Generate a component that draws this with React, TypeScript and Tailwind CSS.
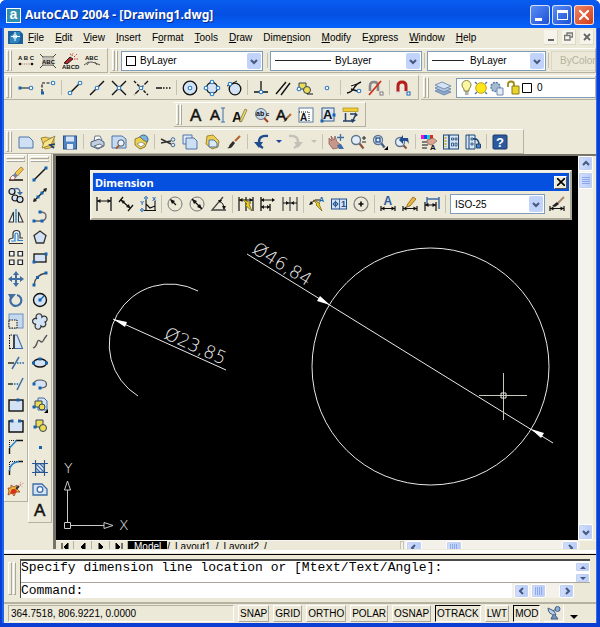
import type { ReactNode } from "react";
import clsx from "clsx";

/* ---------- icon primitives ---------- */

const BLUE = "#1463b0";
const STEEL = "#3f6ea6";
const PALE = "#d3e2f4";
const YELLOW = "#eedb55";

const Dot = ({ x, y }: { x: number; y: number }) => (
  <rect x={x - 1.5} y={y - 1.5} width="3" height="3" fill={BLUE} stroke="none" />
);

const Ring = ({ x, y }: { x: number; y: number }) => (
  <circle cx={x} cy={y} r="1.8" fill="#fff" stroke="#2a7cc9" strokeWidth="1.1" />
);

// horizontal dimension line with arrow heads between two extension lines
const DimLine = ({ y, x1 = 1, x2 = 15 }: { y: number; x1?: number; x2?: number }) => (
  <>
    <path d={`M${x1} ${y}H${x2}`} />
    <path
      d={`M${x1} ${y}l3.5 -2v4zM${x2} ${y}l-3.5 -2v4z`}
      fill="currentColor"
      stroke="none"
    />
  </>
);

interface LetterProps {
  x: number;
  y: number;
  size: number;
  color?: string;
  weight?: string;
  children: string;
}

const Letter = ({ x, y, size, color = "#111", weight = "700", children }: LetterProps) => (
  <text
    x={x}
    y={y}
    fontSize={size}
    fontWeight={weight}
    fill={color}
    stroke={weight === "400" ? color : "none"}
    strokeWidth="0.5"
    fontFamily="Liberation Sans, sans-serif"
  >
    {children}
  </text>
);

const ICONS: Record<string, ReactNode> = {
  /* express text */
  arcText: (
    <>
      <Letter x={0} y={7} size={6}>A B C</Letter>
      <path d="M1 11h14" stroke="#a55" strokeDasharray="1 1.4" />
      <circle cx="2" cy="11" r="1.3" fill="#111" stroke="none" />
      <circle cx="14" cy="11" r="1.3" fill="#111" stroke="none" />
    </>
  ),
  textFrame: (
    <>
      <path d="M3 4h10v8H3zM0 1l3 3M16 1l-3 3M0 15l3-3M16 15l-3-3" stroke="#444" />
      <rect x="2" y="4.500" width="12" height="7" fill="#c9c5bb" stroke="none" />
      <Letter x={2} y={10.5} size={6}>ABC</Letter>
    </>
  ),
  textExplode: (
    <>
      <path d="M2 10l6-6 3 2-6 5z" fill="#b22" stroke="#222" />
      <path d="M10 3l1-3M12 4l3-3M12 6l4 0M9 2l-1-2" stroke="#d33" strokeDasharray="1.500 1" />
      <Letter x={0} y={16} size={6}>ABCD</Letter>
    </>
  ),
  textArc: (
    <>
      <Letter x={1} y={7} size={6}>ABC</Letter>
      <path d="M0 12q4-4 8-3t8 3M5 9L3 12M11 9l2 3" stroke="#555" />
    </>
  ),

  /* object snap */
  track: (<><path d="M2 8h10" /><Dot x={2} y={8} /><Ring x={13} y={8} /></>),
  from: (<><path d="M2 12V3h9" strokeDasharray="3 1.500" strokeWidth="1.200" /><Dot x={2.500} y={13} /><Ring x={13} y={3} /></>),
  endpoint: (<><path d="M3 13L13 3" strokeWidth="1.4" /><Ring x={3} y={13} /><Ring x={13} y={3} /></>),
  midpoint: (<><path d="M1 15L15 1" strokeWidth="1.4" /><Ring x={8} y={8} /></>),
  intersect: (<><path d="M1 1l14 14M15 1L1 15" strokeWidth="1.4" /><Ring x={8} y={8} /></>),
  apparent: (<><path d="M15 1L1 15" strokeWidth="1.3" strokeDasharray="5 1.500" /><path d="M1 1l14 14" strokeWidth="1.4" strokeDasharray="3 1.500" /><Ring x={8} y={8} /></>),
  extension: (<><path d="M1 8h6" strokeWidth="1.4" /><path d="M8 8h8" strokeWidth="1.4" strokeDasharray="1.500 1.500" /></>),
  center: (<><circle cx="8" cy="8" r="6.800" fill={PALE} strokeWidth="1.3" /><Ring x={8} y={8} /></>),
  quadrant: (<><circle cx="8" cy="8" r="5.500" fill={PALE} strokeWidth="1.3" /><Ring x={8} y={2} /><Ring x={8} y={14} /><Ring x={2} y={8} /><Ring x={14} y={8} /></>),
  tangent: (<><circle cx="9" cy="9" r="5.800" fill={PALE} strokeWidth="1.300" /><path d="M1 6L11 1" /><Ring x={4} y={4} /></>),
  perpendicular: (<><path d="M1 12h14M8 1v10" strokeWidth="1.300" /><Ring x={8} y={12} /></>),
  parallel: (<path d="M1 14L11 2M6 15L15 3" strokeWidth="1.400" />),
  insertSnap: (<><path d="M2 3h7v6H2z" fill={YELLOW} stroke="#345" /><circle cx="10" cy="10" r="3.500" fill={YELLOW} stroke="#345" /><path d="M10 14h6" /><Ring x={2} y={9} /></>),
  node: (<Ring x={8} y={8} />),
  nearest: (<><path d="M1 13Q6 12 8 8t7-6" strokeWidth="1.400" /><path d="M5 6l6-2" /><path d="M5 9l6 2" strokeWidth="1.400" /><Ring x={13} y={11} /></>),
  snapNone: (<><path d="M2 11V6q0-4 4-4t4 4v5" stroke="#888" strokeWidth="2.600" /><path d="M1 15L13 1" stroke="#d0301c" strokeWidth="1.800" /><rect x="12" y="12" width="3" height="3" fill="#fff" stroke="#777" /></>),
  snapSettings: (<><path d="M3 12V6q0-4 4-4t4 4v5" stroke="#b61e1e" strokeWidth="3" /><path d="M1.500 12.500h3M9.500 12h3" stroke="#ddd" strokeWidth="2" /><rect x="12" y="12" width="3" height="3" fill="#fff" stroke={BLUE} /></>),
  layers: (<><path d="M0 11l7-3 9 4-7 3z" fill="#8fa9cb" stroke="#5f7ea8" strokeWidth="0.800" /><path d="M0 8l7-3 9 4-7 3z" fill="#b3c7e0" stroke="#5f7ea8" strokeWidth="0.800" /><path d="M0 5l7-3 9 4-7 3z" fill="#d6e3f2" stroke="#5f7ea8" strokeWidth="0.800" /></>),

  /* text */
  mtext: (<Letter x={2} y={14} size={17} weight="400">A</Letter>),
  dtext: (<><Letter x={0} y={13} size={15} weight="400">A</Letter><path d="M11 1h4M13 1v14M11 15h4" stroke={STEEL} /></>),
  editText: (<><Letter x={0} y={15} size={14}>A</Letter><path d="M8 13l5-11 2 1-5 11-2 1z" fill={YELLOW} stroke="#875" strokeWidth="0.800" /></>),
  findText: (<><circle cx="7" cy="7" r="5.500" fill="#c5d9ed" stroke="#678" /><Letter x={2} y={9} size={7}>ab</Letter><Letter x={12} y={9} size={6}>c</Letter><path d="M10 11l4 4" stroke="#a33f22" strokeWidth="2" /></>),
  styleText: (<><Letter x={0} y={13} size={15} weight="400">A</Letter><path d="M7 15q2-1 2-3l2-2 1 1-2 3z" fill="#222" stroke="none" /><path d="M11 11l4-4" stroke="#b06a3b" strokeWidth="2" /></>),
  scaleText: (<><rect x="1" y="1" width="14" height="14" fill="#fff" stroke="#5b7ba5" /><path d="M1 5h10v10" strokeDasharray="1 1" /><Letter x={2} y={14} size={10}>A</Letter></>),
  justifyText: (<><rect x="2" y="1" width="12" height="13" fill="#dfe9f5" stroke="#345b8c" /><Letter x={3} y={12} size={13}>A</Letter><Dot x={2} y={14} /><Dot x={14} y={8} /></>),
  spaceText: (<><rect x="1" y="1" width="15" height="3.500" fill="#f1cf33" stroke="#9a7b12" strokeWidth="0.600" /><path d="M3.500 6v8.500M1 14h9M8 7h6M14 7l-3 6" stroke="#1f3f66" strokeWidth="1.500" /><path d="M13 5l3 3-3 2zM9 12l5 1-4 3z" fill="#1f3f66" stroke="none" /></>),

  /* standard */
  newFile: (<path d="M1 3h10l4 4v7H1z" fill="#cfe0f5" stroke="#4e74a8" />),
  open: (<><path d="M1 4l5-1 2 1h6v9l-9 2z" fill="#f0d060" stroke="#8a7426" strokeWidth="0.800" /><path d="M4 8l11-6-4 9-9 3z" fill="#f8e58b" stroke="#8a7426" strokeWidth="0.800" /><path d="M14 14l-4-3 5-1" stroke="#1f3c74" strokeWidth="1.600" /></>),
  save: (<><rect x="1.500" y="2" width="13" height="13" fill="#4e83c4" stroke="#2c5186" /><rect x="4" y="2.500" width="8" height="5" fill="#d5e4f5" stroke="none" /><rect x="5" y="10" width="6" height="5" fill="#e3ebf5" stroke="none" /></>),
  print: (<><path d="M5 7l1-5h5l2 4" fill="#fff" stroke="#678" /><path d="M2 8l8-3 5 3v4l-6 3-7-3z" fill="#c2cfdf" stroke="#485e7d" /><path d="M5 12l6-2 3 2-5 2z" fill="#fff" stroke="#678" /></>),
  preview: (<><path d="M1 2h10l4 3v9H1z" fill="#c6daf1" stroke="#4e74a8" /><circle cx="10" cy="9" r="3.200" fill="#eef5fd" stroke="#456" /><path d="M8 11.500l-3 3" stroke="#a65a2d" strokeWidth="2" /></>),
  publish: (<><circle cx="10.500" cy="5.500" r="4.500" fill="#7ab4dc" stroke="#35648f" /><path d="M2 5l5-2 3 3 4 2-2 5-5 2-5-4z" fill="#ecd34f" stroke="#7c6519" strokeWidth="0.800" /><path d="M4 10l4-2 4 2-4 3z" fill="#fff" stroke="#777" strokeWidth="0.700" /></>),
  cut: (<><path d="M1 5l10 5M1 9l10-2" strokeWidth="1.500" stroke="#333" /><circle cx="13" cy="5.500" r="1.800" stroke={STEEL} /><circle cx="13" cy="11" r="1.800" stroke={STEEL} /></>),
  copyClip: (<><path d="M1 1h9v9H1z" fill="#dbe8f7" stroke="#4e74a8" /><path d="M4 4h8l3 3v8H4z" fill="#cddff3" stroke="#4e74a8" /></>),
  paste: (<><path d="M3 2l6-1 6 6-1 6-6 2-6-5z" fill="#edcf4d" stroke="#8b7022" strokeWidth="0.800" /><path d="M5 6h5l3 3v4H5z" fill="#dbe8f7" stroke="#4e74a8" /></>),
  match: (<><path d="M9 7l5-5" stroke="#b4632e" strokeWidth="2.200" /><path d="M1 14q2 0 2.500-3L7 7l2 2-3 4q-2 2-5 1z" fill="#2b2b2b" stroke="none" /></>),
  undo: (<><path d="M15 2Q6 1 6 8q0 4 4 6" stroke="#1f4b8f" strokeWidth="2.400" /><path d="M1 8h9l-4 6z" fill="#1f4b8f" stroke="none" /></>),
  redo: (<><path d="M1 2q9-1 9 6 0 4-4 6" stroke="#c3c1b7" strokeWidth="2.400" /><path d="M15 8H6l4 6z" fill="#c3c1b7" stroke="none" /></>),
  pan: (<><path d="M1 4l3 3-1-5 3 4 1-4 2 6 3 2-2 4-5 1-4-5z" fill="#c9978a" stroke="#8d5f59" strokeWidth="0.800" /><path d="M12.500 0v7M9 3.500h7" stroke={STEEL} strokeWidth="1.300" /><path d="M9 11l4-1 3 5h-5z" fill={STEEL} stroke="none" /></>),
  zoomReal: (<><circle cx="6" cy="6" r="4.500" fill="#e4eef9" stroke="#5d738f" strokeWidth="1.300" /><path d="M9.500 9.500l4 5" stroke="#8a5140" strokeWidth="2.200" /><path d="M12 4h4M14 2v4M12 8h4" stroke="#222" /></>),
  zoomWin: (<><circle cx="6" cy="6" r="4.500" fill="#e4eef9" stroke="#5d738f" strokeWidth="1.300" /><rect x="4" y="4" width="4" height="4" stroke="#1c4e8e" strokeWidth="1.300" /><path d="M9.500 9.500l3 4" stroke="#3f5f88" strokeWidth="2.200" /><path d="M16 12v4h-4z" fill="#000" stroke="none" /></>),
  zoomPrev: (<><circle cx="6" cy="8" r="4.500" fill="#e4eef9" stroke="#5d738f" strokeWidth="1.300" /><path d="M9.500 11.500l3 3" stroke="#8a5140" strokeWidth="2.200" /><path d="M5 6l4-5v3h5l1 6q-2-4-6-3v3z" fill="#1f4b8f" stroke="none" /></>),
  properties: (<><path d="M0 1h3v4H0z" fill="#e11ad6" stroke="none" /><path d="M3 1h3v4H3z" fill="#1b43ef" stroke="none" /><path d="M6 1h3v4H6z" fill="#16d3cf" stroke="none" /><path d="M9 1h3v4H9z" fill="#e82323" stroke="none" /><path d="M6 6l6-2 4 3-5 4-4-1z" fill="#d9a48f" stroke="#8b5e50" strokeWidth="0.700" /><path d="M1 8h5M1 11h6M1 14h5" /><Letter x={9} y={16} size={8}>A</Letter></>),
  designCenter: (<><rect x="0.500" y="1" width="15" height="14" fill="#d8e5f5" stroke="#1d4679" /><path d="M6 1v14" stroke="#1d4679" strokeWidth="1.600" /><path d="M2.500 3v10" stroke="#c9b12a" strokeWidth="2" strokeDasharray="2 1" /><path d="M8.500 4h2v2h-2zM12 4h2v2h-2zM8.500 9h2v3h-2zM12 9h2v3h-2z" stroke="#1d4679" strokeWidth="0.800" /></>),
  palettes: (<><path d="M1 1h9v14H1z" fill="#d8e5f5" stroke="#1d4679" /><path d="M4 1v14" stroke="#1d4679" /><path d="M6 4h2v2H6zM6 9h2v2H6z" stroke="#1d4679" strokeWidth="0.800" /><path d="M8 5q6-1 6 6" stroke="#1d4679" strokeWidth="1.500" /><path d="M11.500 10h4v4h-4z" fill="#4d80bd" stroke="#1d4679" /></>),
  help: (<><rect x="1" y="1" width="14" height="14" rx="1" fill="#2a5b9e" stroke="#1a3b6d" /><Letter x={4} y={13} size={13} color="#fff">?</Letter></>),

  /* modify */
  erase: (<><path d="M1 14h14" strokeWidth="1.300" /><path d="M7 7l6-6 2.500 2-6 7z" fill="#f1c84f" stroke="#a66a21" strokeWidth="0.800" /><path d="M5 9l2-2 2.500 3-2 2z" fill="#5c86bd" stroke="none" /><path d="M2 12l3-3 2.500 3-2 1.500H3z" fill="#fff" stroke="#b0563f" strokeWidth="0.900" /></>),
  copyObj: (<><circle cx="4" cy="4.500" r="3" fill={PALE} strokeWidth="1.200" /><circle cx="7" cy="11" r="3" fill={PALE} strokeWidth="1.200" /><circle cx="12" cy="12.500" r="3" fill={PALE} strokeWidth="1.200" /><path d="M6 2q6-2 6 4" stroke={STEEL} strokeWidth="1.500" /><path d="M9 5h6l-3 3.500z" fill={STEEL} stroke="none" /></>),
  mirror: (<><path d="M5.500 4v10H1z" fill="#f2f6fb" strokeWidth="1.100" stroke="#333" /><path d="M10.500 4v10H15z" fill="#f2f6fb" strokeWidth="1.100" stroke="#333" /><path d="M8 1v14" stroke="#1c82cf" strokeWidth="1.300" /></>),
  offset: (<><path d="M1 13.500v-2q0-2 4-2.500V5q0-3.500 3.500-3.500T12 5v4h3" fill="#f2f6fb" strokeWidth="1.200" stroke="#333" /><path d="M3 12h4V6q0-2 1.500-2T10 6v5.500h5" stroke="#2680cd" strokeWidth="1.200" /><path d="M1 14.500h14" strokeWidth="1.200" stroke="#333" /></>),
  array: (<path d="M1.500 1.500h4.500v4.500H1.500zM10 1.500h4.500v4.500H10zM1.500 10h4.500v4.500H1.500zM10 10h4.500v4.500H10z" fill="#f2f6fb" strokeWidth="1.200" stroke="#222" />),
  move: (<path d="M8 0l3 4H9v3h3V5l4 3-4 3V9H9v3h2l-3 4-3-4h2V9H4v2L0 8l4-3v2h3V4H5z" fill={STEEL} stroke="none" />),
  rotate: (<><path d="M3.500 5A5.500 5.500 0 1 0 9 3" stroke={STEEL} strokeWidth="2.200" /><path d="M0 2h8L3 8z" fill={STEEL} stroke="none" /></>),
  scale: (<><rect x="1" y="1" width="14" height="14" fill="#c4d8ef" stroke="#6d92bf" /><rect x="1" y="7" width="8" height="8" fill="#ece9d8" strokeDasharray="1.500 1" /></>),
  stretch: (<><path d="M1.500 15V1h4M1.500 14.500h4" strokeDasharray="1.500 1" /><path d="M6 1v13.500h8.500L9 1z" fill={PALE} strokeWidth="1.100" stroke={STEEL} /><path d="M6 1v13.500" strokeWidth="1.300" /></>),
  trim: (<><path d="M0 8h6" strokeWidth="1.300" /><path d="M9 8h7" stroke={BLUE} strokeDasharray="1.500 1.200" strokeWidth="1.300" /><path d="M4 14l7-12" stroke={STEEL} strokeWidth="1.500" /></>),
  extend: (<><path d="M0 8h5" strokeWidth="1.300" /><path d="M6 8h5" stroke={BLUE} strokeDasharray="1.500 1.200" strokeWidth="1.300" /><path d="M9 14l6-12" stroke={STEEL} strokeWidth="1.500" /></>),
  breakPoint: (<><rect x="1" y="3" width="14" height="11" fill={PALE} strokeWidth="1.400" /><Dot x={10} y={3} /></>),
  breakObj: (<><path d="M3 3H1v11h14V3h-2" fill={PALE} strokeWidth="1.400" /><Dot x={4} y={3} /><Dot x={11.500} y={3} /></>),
  chamfer: (<><path d="M1.500 15V9M8 1.500h7" strokeWidth="1.400" /><path d="M1.500 8V1.500h6" strokeDasharray="1 1" /><path d="M1.500 9l7-7.500" stroke="#2680cd" strokeWidth="1.400" /></>),
  fillet: (<><path d="M1.500 15v-5M10 1.500h5" strokeWidth="1.400" /><path d="M1.500 9V1.500h8" strokeDasharray="1 1" /><path d="M1.500 11Q2 2.500 11 1.500" stroke="#2680cd" strokeWidth="1.600" /></>),
  explode: (<><path d="M0 7l3 0 0-3 3 2 3-2 0 4 3 3-4 0-2 4-2-3-4 2 1-4z" fill="#eebd35" stroke="#9a3a22" strokeWidth="0.800" /><path d="M2 12l2-4 3 0 2 2-3 3z" fill="#d8301e" stroke="none" /><path d="M8 8l3-3" stroke="#333" strokeWidth="2" /><path d="M12 4l1-4M12 4l4-2M12 4l3 2" stroke="#d66" strokeWidth="0.800" strokeDasharray="1 1" /></>),

  /* draw */
  line: (<><path d="M2 14L14 2" strokeWidth="1.400" /><Dot x={2} y={14} /><Dot x={14} y={2} /></>),
  xline: (<><path d="M2 14L14 2" strokeWidth="1.200" /><path d="M1 15l1-4 3 3zM15 1l-4 1 3 3z" fill="#222" stroke="none" /><Dot x={6} y={10} /><Dot x={10} y={6} /></>),
  pline: (<><path d="M2 13h8q4-1 4-5T8 4" strokeWidth="1.400" stroke="#667" /><Dot x={2} y={13} /><Dot x={10} y={13} /><Dot x={8} y={4} /></>),
  polygon: (<path d="M8 2l6 4.500-2.300 7.500H4.300L2 6.500z" fill={PALE} strokeWidth="1.300" stroke="#333" />),
  rect: (<><rect x="2" y="4" width="12" height="8" fill={PALE} strokeWidth="1.300" /><Dot x={2} y={12} /><Dot x={14} y={4} /></>),
  arc: (<><path d="M2 14Q3 4 14 2" strokeWidth="1.300" stroke="#444" /><Dot x={2} y={14} /><Dot x={5.500} y={6.500} /><Dot x={14} y={2} /></>),
  circle: (<><circle cx="8" cy="8" r="6.500" fill={PALE} strokeWidth="1.400" /><path d="M8 8l4-4" stroke={BLUE} strokeWidth="1.300" /><Dot x={8} y={8} /></>),
  cloud: (<path d="M5 6a3 3 0 1 1 5-2 3 3 0 1 1 3 5 2.800 2.800 0 1 1-4 4 3 3 0 1 1-5-2A2.800 2.800 0 1 1 5 6z" fill={PALE} strokeWidth="1.200" stroke="#333" />),
  spline: (<path d="M1 14Q4 13 5 9t3-2 3 0 4-6" strokeWidth="1.300" stroke="#555" />),
  ellipse: (<><ellipse cx="8" cy="8" rx="6.500" ry="4" fill={PALE} strokeWidth="1.300" /><Dot x={1.500} y={8} /><Dot x={14.500} y={8} /><Dot x={8} y={4} /></>),
  ellipseArc: (<><path d="M2 8q0-4 6-4t6.500 4-6.500 4" fill={PALE} strokeWidth="1.200" stroke="#555" /><Dot x={2} y={8} /><Dot x={8} y={12} /></>),
  insertBlock: (<><path d="M6 1h6l3 3v9H6z" fill={PALE} stroke={STEEL} /><path d="M3 4h7v6H3z" fill={YELLOW} stroke="#345" /><circle cx="10" cy="10" r="3" fill={YELLOW} stroke="#345" /><Dot x={2} y={10} /><path d="M16 12v4h-4z" fill="#000" stroke="none" /></>),
  makeBlock: (<><path d="M4 2h7v7H4z" fill={YELLOW} stroke="#345" /><circle cx="11" cy="10" r="3.500" fill={YELLOW} stroke="#345" /><Dot x={3} y={9} /></>),
  point: (<Dot x={8.500} y={8.500} />),
  hatch: (<><path d="M4 4h8v8H4z" fill="#eef4fb" stroke={STEEL} /><path d="M4 8l4 4M4 4l8 8M8 4l4 4" stroke={STEEL} strokeWidth="1.200" /><path d="M3.500 0v16M12.500 0v16M0 3.500h16M0 12.500h16" stroke="#2a568f" strokeWidth="1.100" /></>),
  region: (<><path d="M1 3h9l5 5v6H1z" fill={PALE} stroke={STEEL} strokeWidth="1.300" /><circle cx="8" cy="8.500" r="2.800" fill="#fff" stroke={STEEL} strokeWidth="1.300" /></>),

  /* dimension */
  dimLinear: (<><path d="M1 1v14M15 1v14" strokeWidth="1.300" /><DimLine y={5} /></>),
  dimAligned: (<><path d="M3 4l9 8M5 1L1 6M15 9l-5 6" strokeWidth="1.300" /><path d="M3 4l4 1-2 3zM12 12l-4-1 3-3z" fill="#111" stroke="none" /></>),
  dimOrdinate: (
    <>
      <path d="M6 4v11M4 14.500h12M6 8l4 4 5-2M15 5v9" strokeWidth="1.100" />
      <Letter x={0} y={9} size={6} color={BLUE}>Y</Letter>
      <Letter x={12} y={4.5} size={6} color={BLUE}>X</Letter>
      <circle cx="2" cy="14" r="1.300" stroke={BLUE} />
      <circle cx="6" cy="2" r="1.300" stroke={BLUE} />
    </>
  ),
  dimRadius: (<><circle cx="8" cy="8" r="7" stroke="#777" /><path d="M9 9L4 4" strokeWidth="1.300" /><path d="M3 3l5 2-3 3z" fill="#111" stroke="none" /></>),
  dimDiameter: (<><circle cx="8" cy="8" r="7" stroke="#777" /><path d="M3 3l10 10" strokeWidth="1.300" /><path d="M3 3l5 2-3 3zM13 13l-5-2 3-3z" fill="#111" stroke="none" /></>),
  dimAngular: (<><path d="M12 1L1 14h14" strokeWidth="1.300" stroke="#444" /><path d="M8 5q5 2 5 8" /><path d="M7 4l4 0-2 3zM13 14l-2-4h4z" fill="#111" stroke="none" /></>),
  dimQuick: (<><path d="M1 1v14M15 1v14M8 1v14" strokeWidth="1.200" /><DimLine y={4} /><path d="M4 3l9 4-2 1 3 7-7-6 2-1z" fill="#e8cf22" stroke="#6d5d0a" strokeWidth="0.700" /></>),
  dimBase: (<><path d="M1 1v14M10 8v7" strokeWidth="1.300" /><path d="M1 4h13M1 11h9" /><path d="M1 4l3-2v4zM15 4l-3-2v4zM1 11l3-2v4zM10 11l-3-2v4z" fill="#111" stroke="none" /></>),
  dimContinue: (<><path d="M1 1v14M8 1v14M15 1v14" strokeWidth="1.200" stroke="#444" /><path d="M1 7h14" /><path d="M7 7l-3-2v4zM9 7l3-2v4z" fill="#111" stroke="none" /></>),
  leader: (<><path d="M1 8l5-4h5" /><path d="M0 9l2-4 2 3z" fill="#111" stroke="none" /><path d="M4 4l7 3-1 1 3 7-6-6 1-1z" fill="#e8cf22" stroke="#6d5d0a" strokeWidth="0.700" /><Letter x={10} y={6} size={7} color={BLUE}>A</Letter></>),
  tolerance: (<><rect x="0.500" y="3" width="15" height="10" fill="#d5e4f5" stroke="#1c4e8e" /><path d="M8.500 3v10M4.500 4.500v7M1.500 8h6" stroke="#1c4e8e" strokeWidth="0.800" /><circle cx="4.500" cy="8" r="2" stroke="#1c4e8e" /><Letter x={10} y={11} size={9} color="#1c4e8e">1</Letter></>),
  centerMark: (<><circle cx="8" cy="8" r="7" stroke="#777" strokeWidth="1.200" /><path d="M8 5.500v5M5.500 8h5" strokeWidth="1.700" /></>),
  dimEdit: (<><Letter x={3.500} y={9} size={12} color="#2c5c9c">A</Letter><path d="M1 10v5M15 10v5" strokeWidth="1.200" /><DimLine y={12.500} /></>),
  dimTextEdit: (<><path d="M5 9l6-8 3 2-6 7-3 1z" fill="#e9b93d" stroke="#8a5a20" strokeWidth="0.800" /><path d="M1 10v5M15 10v5" strokeWidth="1.200" /><DimLine y={12.500} /></>),
  dimUpdate: (<><path d="M3 1v8M15 1v12M3 3h12" stroke={STEEL} strokeWidth="1.500" /><path d="M1 6v9M12 6v9" strokeWidth="1.200" /><DimLine y={9} x2={12} /></>),
  dimStyle: (<><path d="M9 7l6-6" stroke="#a9876b" strokeWidth="2" /><path d="M3 10l5-4 2 2-4 3z" fill="#222" stroke="none" /><path d="M1 10v5M15 10v5" strokeWidth="1.200" /><DimLine y={12.500} /></>),
};

const Icon = ({ name }: { name: string }) => (
  <svg viewBox="0 0 16 16" className="h-4 w-4 shrink-0 overflow-visible text-[#111]" fill="none" stroke="currentColor" aria-hidden="true">
    {ICONS[name]}
  </svg>
);

/* ---------- toolbars ---------- */

const Chevron = ({ dir = "down" }: { dir?: "up" | "down" | "left" | "right" }) => {
  const d = {
    down: "M1 3l3 3 3-3",
    up: "M1 5l3-3 3 3",
    left: "M5 1L2 4l3 3",
    right: "M3 1l3 3-3 3",
  }[dir];
  return (
    <svg viewBox="0 0 8 8" className="h-2 w-2 shrink-0" fill="none" stroke="#45597d" strokeWidth="2" aria-hidden="true">
      <path d={d} />
    </svg>
  );
};

const Grip = ({ vertical }: { vertical?: boolean }) => (
  <div className={clsx("flex shrink-0 gap-px", vertical ? "mx-0.5 mb-px h-1.5 flex-col" : "mx-0.5 my-px w-1.5")}>
    <div className="flex-1 border border-t-white border-l-white border-r-[#aca899] border-b-[#aca899]" />
    <div className="flex-1 border border-t-white border-l-white border-r-[#aca899] border-b-[#aca899]" />
  </div>
);

const Separator = () => <div className="mx-0.5 my-1 w-px shrink-0 bg-[#c5c2b2]" />;

const Tool = ({ name, vertical }: { name: string; vertical?: boolean }) => (
  <button aria-label={name} className={clsx("flex shrink-0 items-center justify-center", vertical ? "h-[21px] w-full" : "w-[22px]")}>
    <Icon name={name} />
  </button>
);

const DropArrow = ({ disabled }: { disabled?: boolean }) => (
  <button aria-label="History" className="flex w-[13px] shrink-0 items-center justify-center">
    <span className={clsx("border-x-[3px] border-t-[3px] border-x-transparent", disabled ? "border-t-[#c3c1b7]" : "border-t-[#1f3fa0]")} />
  </button>
);

// "|" is a separator, "v" and "x" are the enabled / disabled history arrows
const renderTools = (names: string[]) =>
  names.map((n, i) => {
    if (n === "|") return <Separator key={i} />;
    if (n === "v") return <DropArrow key={i} />;
    if (n === "x") return <DropArrow key={i} disabled />;
    return <Tool key={i} name={n} />;
  });

const Toolbar = ({ className, children }: { className?: string; children: ReactNode }) => (
  <div className={clsx("flex h-[25px] min-w-0 border-t border-r border-b border-t-white border-r-[#b5b2a2] border-b-[#b5b2a2] pr-1", className)}>
    <Grip />
    <div className="ml-px flex min-w-0 flex-1">{children}</div>
  </div>
);

interface ComboProps {
  label: string;
  value: string;
  leading?: ReactNode;
  className?: string;
  pad: string;
}

const Combo = ({ label, value, leading, className, pad }: ComboProps) => (
  <div className={clsx("relative flex h-5 items-center self-center border border-[#7f9db9] bg-white", className)}>
    <span className="pointer-events-none absolute left-1 flex items-center">{leading}</span>
    <select aria-label={label} className={clsx("h-full w-full min-w-0 appearance-none bg-transparent text-[10px] outline-none", pad)}>
      <option>{value}</option>
    </select>
    <span className="pointer-events-none absolute top-px right-px bottom-px flex w-3.5 items-center justify-center rounded-[2px] bg-[#c1d2fb]">
      <Chevron />
    </span>
  </div>
);

/* ---------- title + menu ---------- */

const MENUS: [string, string, string][] = [
  ["", "F", "ile"],
  ["", "E", "dit"],
  ["", "V", "iew"],
  ["", "I", "nsert"],
  ["F", "o", "rmat"],
  ["", "T", "ools"],
  ["", "D", "raw"],
  ["Dime", "n", "sion"],
  ["", "M", "odify"],
  ["E", "x", "press"],
  ["", "W", "indow"],
  ["", "H", "elp"],
];

const CAPTION = "flex size-5 items-center justify-center rounded-[3px] border border-white/80";

const TitleBar = () => (
  <header className="flex h-7 shrink-0 items-center bg-linear-to-b from-[#0a5cf0] via-[#0450e2] to-[#0762fb] pt-0.5 pl-1.5">
    <div className="mr-1 flex size-[15px] items-center justify-center border border-white bg-[#2f8fae] pb-0.5 font-['Liberation_Sans',sans-serif] text-sm leading-none font-bold text-white">
      a
    </div>
    <h1 className="min-w-0 flex-1 truncate font-['Noto_Sans',sans-serif] text-xs font-bold text-white [text-shadow:1px_1px_0_#0a2a88]">
      AutoCAD 2004 - [Drawing1.dwg]
    </h1>
    <div className="flex gap-0.5 pr-1.5">
      <button aria-label="Minimize" className={clsx(CAPTION, "bg-linear-to-br from-[#5a8df5] to-[#1c4fd6]")}>
        <span className="mt-2 mr-1 h-[3px] w-[7px] bg-white" />
      </button>
      <button aria-label="Maximize" className={clsx(CAPTION, "bg-linear-to-br from-[#5a8df5] to-[#1c4fd6]")}>
        <span className="h-[10px] w-[11px] border border-t-[3px] border-white" />
      </button>
      <button aria-label="Close" className={clsx(CAPTION, "bg-linear-to-br from-[#ee8464] to-[#cf3a12]")}>
        <svg viewBox="0 0 10 10" className="size-2.5" stroke="#fff" strokeWidth="2">
          <path d="M0 0l10 10M10 0L0 10" />
        </svg>
      </button>
    </div>
  </header>
);

const MDI = "flex h-[15px] w-3.5 items-center justify-center bg-[#f5f3ea] border-r border-b border-[#dcd9c8]";

const MenuBar = () => (
  <nav className="flex h-5 shrink-0 items-center pr-0.5 pb-0.5 pl-1">
    <svg viewBox="0 0 15 15" className="mr-[5px] size-[15px]" aria-hidden="true">
      <path d="M0 1h12l3 3v10H0z" fill="#1c5f9c" />
      <path d="M2 13V6l5-4h5v8l-3 3z" fill="#2f86bd" />
      <path d="M7 2v9M3 6.500h9" stroke="#fff" strokeWidth="1" />
      <path d="M5.500 5h3v3h-3z" fill="none" stroke="#fff" strokeWidth="0.800" />
    </svg>
    <ul className="flex flex-1 gap-[11px] text-[10px]">
      {MENUS.map(([pre, key, post]) => (
        <li key={pre + key + post}>
          <button>
            {pre}
            <u>{key}</u>
            {post}
          </button>
        </li>
      ))}
    </ul>
    <div className="flex gap-1">
      <button aria-label="Minimize drawing" className={MDI}>
        <span className="mt-1.5 h-0.5 w-1.5 bg-[#666]" />
      </button>
      <button aria-label="Restore drawing" className={MDI}>
        <svg viewBox="0 0 9 9" className="size-[9px]" fill="none" stroke="#777">
          <path d="M3 3V1h5.500v4H6.500" strokeWidth="1.400" />
          <path d="M.5 3.500h5.500v4.500H.5z" strokeWidth="1.400" />
        </svg>
      </button>
      <button aria-label="Close drawing" className={MDI}>
        <svg viewBox="0 0 8 8" className="size-2" stroke="#666" strokeWidth="1.800">
          <path d="M1 1l6 6M7 1L1 7" />
        </svg>
      </button>
    </div>
  </nav>
);

const LineSample = ({ long }: { long?: boolean }) => (
  <span className={clsx("h-px bg-[#222]", long ? "w-14" : "w-8")} />
);
const Swatch = () => <span className="size-2.5 border border-black bg-white" />;

const LayerState = () => (
  <svg viewBox="0 0 74 16" className="h-4 w-[74px]" fill="none" aria-hidden="true">
    <path d="M3 9Q1 7 1 5a4.300 4.300 0 0 1 9 0q0 2-2 4v2H3z" fill="#fbf6a0" stroke="#8a8348" />
    <path d="M4 12h3.500M4 14h3.500" stroke="#666" />
    <path d="M14 2l2 2M26 2l-2 2M14 14l2-2M26 14l-2-2" stroke="#4f83b8" strokeWidth="1.500" />
    <circle cx="20" cy="8" r="5.300" fill="#fde51c" stroke="#c9a20e" />
    <circle cx="34.500" cy="7" r="4.500" fill="#a4bad1" stroke="#5a7ea5" strokeWidth="1.500" strokeDasharray="2 1" />
    <path d="M36 8h6v7h-6z" fill="#e3ecf6" stroke="#6e8db1" />
    <path d="M47 7V4q0-2.500 3-2.500T53 4v5" stroke="#9b8a17" strokeWidth="1.800" />
    <path d="M51 6h7v8h-7z" fill="#e7d52c" stroke="#8a7a14" />
    <path d="M61.500 3.500h9v9h-9z" fill="#fff" stroke="#000" />
  </svg>
);

const Toolbars = () => (
  <div className="flex shrink-0 flex-col gap-0.5 overflow-hidden">
    <div className="flex">
      <Toolbar className="mr-0.5">{renderTools(["arcText", "textFrame", "textExplode", "textArc"])}</Toolbar>
      <Toolbar className="flex-1">
        <div className="flex min-w-0 flex-1">
          <Combo label="Color" value="ByLayer" leading={<Swatch />} pad="pl-[18px]" className="mr-0.5 w-[142px]" />
          <Separator />
          <Combo label="Linetype" value="ByLayer" leading={<LineSample long />} pad="pl-16" className="w-[152px]" />
          <Separator />
          <Combo label="Lineweight" value="ByLayer" leading={<LineSample />} pad="pl-[42px]" className="w-[119px]" />
          <Separator />
          <button disabled className="-mr-1 h-5 min-w-0 flex-1 self-center overflow-hidden border border-r-0 border-[#d9d6c5] pl-2 text-left text-[10px] text-[#b5b2a0]">
            ByColor
          </button>
        </div>
      </Toolbar>
    </div>
    <div className="flex">
      <Toolbar className="mr-0.5">
        {renderTools([
          "track", "from", "|", "endpoint", "midpoint", "intersect", "apparent", "extension", "|",
          "center", "quadrant", "tangent", "|", "perpendicular", "parallel", "insertSnap", "node", "|",
          "nearest", "snapNone", "|", "snapSettings",
        ])}
      </Toolbar>
      <Toolbar className="flex-1">
        <div className="-mr-1 flex min-w-0 flex-1">
          <span className="mr-0.5 flex"><Tool name="layers" /></span>
          <div className="relative flex h-5 min-w-0 flex-1 items-center self-center border-y border-l border-[#7f9db9] bg-white">
            <span className="pointer-events-none absolute left-1"><LayerState /></span>
            <select aria-label="Layer" className="h-full w-full min-w-0 appearance-none bg-transparent pl-20 text-[10px] outline-none">
              <option>0</option>
            </select>
          </div>
        </div>
      </Toolbar>
    </div>
    <div className="flex pl-[170px]">
      <Toolbar>{renderTools(["mtext", "dtext", "editText", "findText", "styleText", "scaleText", "justifyText", "spaceText"])}</Toolbar>
    </div>
    <div className="flex">
      <Toolbar>
        {renderTools([
          "newFile", "open", "save", "|", "print", "preview", "publish", "|", "cut", "copyClip", "paste", "match", "|",
          "undo", "v", "redo", "x", "|", "pan", "zoomReal", "zoomWin", "zoomPrev", "|",
          "properties", "designCenter", "palettes", "|", "help",
        ])}
        <span className="w-2" />
      </Toolbar>
    </div>
  </div>
);

const SideBar = ({ names }: { names: string[] }) => (
  <div className="w-6 shrink-0 self-start border-r border-b border-r-[#b5b2a2] border-b-[#b5b2a2] pt-0.5 pb-0.5 shadow-[inset_1px_1px_0_#fff]">
    <Grip vertical />
    {names.map((n) => (
      <Tool key={n} name={n} vertical />
    ))}
  </div>
);

const MODIFY = ["erase", "copyObj", "mirror", "offset", "array", "move", "rotate", "scale", "stretch", "trim", "extend", "breakPoint", "breakObj", "chamfer", "fillet", "explode"];
const DRAW = ["line", "xline", "pline", "polygon", "rect", "arc", "circle", "cloud", "spline", "ellipse", "ellipseArc", "insertBlock", "makeBlock", "point", "hatch", "region", "mtext"];

/* ---------- drawing area ---------- */

const SCROLL = "flex shrink-0 items-center justify-center rounded-[2px] border border-white bg-linear-to-r from-[#d2dffd] to-[#b7cbfb] shadow-[0_0_0_1px_#c3d0ee_inset]";

const Drawing = () => (
  <svg className="block h-full w-full" fill="none" stroke="#e8e8e8" aria-label="Drawing1">
    <circle cx="374.500" cy="210.500" r="118.500" />
    <path d="M191 98L497 287" />
    <path d="M274 149l-13-4 3-5zM475 273l13 4-3 5z" fill="#fff" stroke="none" />
    <path d="M142 135A60.500 60.500 0 0 0 82 240" />
    <path d="M57 163l113 51" />
    <path d="M57 163l14 3-2 5z" fill="#fff" stroke="none" />
    <g fill="#eee" stroke="none" fontFamily="DejaVu Sans, sans-serif" fontWeight="200" fontSize="18">
      <text transform="translate(195 96) rotate(31.700)">Ø46,84</text>
      <text transform="translate(107 182) rotate(24.300)">Ø23,85</text>
      <text x="8" y="317" fontSize="14">Y</text>
      <text x="63" y="374" fontSize="14">X</text>
    </g>
    {/* ucs icon */}
    <path d="M8.500 366.500h6v6h-6zM11.500 366V334M15 369.500H48M11.500 325l-3 9h6zM57 369.500l-9-3v6z" stroke="#c9c9c9" />
    {/* crosshair */}
    <path d="M423 239.500h48M447.500 217v47" stroke="#c9c9b8" />
    <path d="M445 237h5v5h-5z" />
  </svg>
);

const DimensionBar = () => (
  <section aria-label="Dimension" className="absolute top-[14px] right-1.5 left-[34px] border-2 border-t-[#f4f2e8] border-r-[#aca899] border-b-[#aca899] border-l-[#f4f2e8] bg-[#ece9d8] p-px">
    <div className="flex h-[18px] items-center bg-[#0650e0] pr-0.5">
      <h2 className="flex-1 pl-0.5 font-['Noto_Sans',sans-serif] text-[11px] leading-none font-bold text-white">Dimension</h2>
      <button aria-label="Close toolbar" className="flex size-[13px] items-center justify-center border border-t-white border-r-[#555] border-b-[#555] border-l-white bg-[#ece9d8]">
        <svg viewBox="0 0 8 8" className="size-2" stroke="#000" strokeWidth="1.600">
          <path d="M0 0l8 8M8 0L0 8" />
        </svg>
      </button>
    </div>
    <div className="flex h-[26px]">
      {renderTools([
        "dimLinear", "dimAligned", "dimOrdinate", "|", "dimRadius", "dimDiameter", "dimAngular", "|",
        "dimQuick", "dimBase", "dimContinue", "|", "leader", "tolerance", "centerMark", "|",
        "dimEdit", "dimTextEdit", "dimUpdate", "|",
      ])}
      <Combo label="Dimension style" value="ISO-25" pad="pl-1" className="ml-0.5 w-[95px]" />
      <span className="ml-px flex"><Tool name="dimStyle" /></span>
    </div>
  </section>
);

const TAB_NAV = ["M3 2v8M9 2L5 6l4 4z", "M8 2L4 6l4 4z", "M4 2l4 4-4 4z", "M9 2v8M3 2l4 4-4 4z"];

function ThumbLines({ vertical }: { vertical?: boolean }) {
  return (
    <svg viewBox="0 0 8 8" className="size-2" stroke="#8ea9ea">
      <path d={vertical ? "M0 .5h8M0 2.500h8M0 4.500h8M0 6.500h8" : "M.5 0v8M2.500 0v8M4.500 0v8M6.500 0v8"} />
    </svg>
  );
}

const LayoutTabs = () => (
  <div className="flex h-[9px] items-start overflow-hidden border-t border-[#f6f4ec] text-[10px] leading-3">
    <div className="flex">
      {TAB_NAV.map((d, i) => (
        <button key={i} aria-label={`Tab scroll ${i + 1}`} className="flex w-[18px] justify-center border-r border-[#b5b2a2]">
          <svg viewBox="0 0 12 12" className="size-3" fill="#000" stroke="#000">
            <path d={d} />
          </svg>
        </button>
      ))}
    </div>
    <button className="relative flex bg-black px-1.5 text-white">Model</button>
    <span aria-hidden="true">/</span>
    <button className="px-[5px]">Layout1</button>
    <span aria-hidden="true">/</span>
    <button className="px-[5px]">Layout2</button>
    <span aria-hidden="true">/</span>
    <div className="mr-4 ml-auto flex w-[180px] items-start bg-[#f3f1ea]">
      <span className="mr-0.5 h-3 w-1 border border-[#c5c2b2]" />
      <button aria-label="Scroll left" className={clsx(SCROLL, "h-3.5 w-4")}><Chevron dir="left" /></button>
      <span className={clsx(SCROLL, "ml-6 h-3.5 w-4")}><ThumbLines /></span>
      <button aria-label="Scroll right" className={clsx(SCROLL, "mr-0.5 ml-auto h-3.5 w-4")}><Chevron dir="right" /></button>
    </div>
  </div>
);

const Workspace = () => (
  <div className="flex min-h-0 flex-1">
    <SideBar names={MODIFY} />
    <SideBar names={DRAW} />
    <div className="ml-px flex min-w-0 flex-1 flex-col border-t-2 border-l-[3px] border-[#77756a]">
      <div className="flex min-h-0 flex-1">
        <main className="relative min-w-0 flex-1 overflow-hidden bg-black">
          <Drawing />
          <DimensionBar />
        </main>
        <div className="mr-[3px] flex w-[15px] flex-col gap-px bg-[#f4f2ec]">
          <button aria-label="Scroll up" className={clsx(SCROLL, "h-[15px]")}><Chevron dir="up" /></button>
          <span className={clsx(SCROLL, "h-[17px]")}><ThumbLines vertical /></span>
          <button aria-label="Scroll down" className={clsx(SCROLL, "mt-auto h-4")}><Chevron dir="down" /></button>
        </div>
      </div>
      <LayoutTabs />
    </div>
  </div>
);

/* ---------- command line + status ---------- */

const CommandLine = () => (
  <div className="flex h-12 shrink-0 border-t border-black pt-1 pr-1.5 pb-1">
    <div className="mx-1 mt-[3px] mb-[3px] flex w-2 gap-px">
      <div className="flex-1 border border-t-white border-r-[#aca899] border-b-[#aca899] border-l-white" />
      <div className="flex-1 border border-t-white border-r-[#aca899] border-b-[#aca899] border-l-white" />
    </div>
    <div className="flex min-w-0 flex-1 flex-col border-t-2 border-l border-[#4a4a46] font-['Liberation_Mono',monospace] text-[13px]">
      <div className="flex flex-1 justify-between overflow-hidden bg-white">
        <output className="leading-[14px] whitespace-nowrap">Specify dimension line location or [Mtext/Text/Angle]:</output>
        <div className="mt-px flex w-[15px] shrink-0 flex-col gap-px">
          <button aria-label="History up" className={clsx(SCROLL, "h-2.5")}>
            <span className="border-x-[3px] border-b-[3px] border-x-transparent border-b-[#45597d]" />
          </button>
          <button aria-label="History down" className={clsx(SCROLL, "h-2.5")}>
            <span className="border-x-[3px] border-t-[3px] border-x-transparent border-t-[#45597d]" />
          </button>
        </div>
      </div>
      <div className="flex h-4 items-stretch border-t border-[#aca899]">
        <label htmlFor="command" className="bg-white pt-px leading-[14px]">Command:</label>
        <input id="command" type="text" className="min-w-0 flex-1 bg-white outline-none" />
        <div className="flex w-[62px] items-center gap-0.5 bg-[#f3f1ea] pl-0.5">
          <button aria-label="Scroll command left" className={clsx(SCROLL, "h-3.5 w-[15px]")}><Chevron dir="left" /></button>
          <span className={clsx(SCROLL, "h-3.5 w-[15px]")}><ThumbLines /></span>
          <button aria-label="Scroll command right" className={clsx(SCROLL, "ml-auto h-3.5 w-[15px]")}><Chevron dir="right" /></button>
        </div>
        <div className="w-4" />
      </div>
    </div>
  </div>
);

const MODES = [
  { name: "SNAP", on: false },
  { name: "GRID", on: false },
  { name: "ORTHO", on: false },
  { name: "POLAR", on: false },
  { name: "OSNAP", on: false },
  { name: "OTRACK", on: true },
  { name: "LWT", on: false },
  { name: "MOD", on: true },
];

const StatusBar = () => (
  <footer className="flex h-[21px] shrink-0 items-center gap-1 border-t-2 border-[#b5b2a2] pl-1 text-[10px]">
    <output className="h-[17px] w-[226px] border border-t-[#b5b2a2] border-r-white border-b-white border-l-[#b5b2a2] pl-0.5 leading-4 whitespace-nowrap">
      364.7518, 806.9221, 0.0000
    </output>
    {MODES.map((m) => (
      <button
        key={m.name}
        aria-pressed={m.on}
        className={clsx(
          "h-[17px] border px-px leading-4 whitespace-nowrap",
          m.on
            ? "border-t-black border-r-white border-b-white border-l-black"
            : "border-t-white border-r-[#aca899] border-b-[#aca899] border-l-white"
        )}
      >
        {m.name}
      </button>
    ))}
    <div className="flex h-[17px] w-5 items-center justify-center border-r border-b border-white">
      <svg viewBox="0 0 14 14" className="size-3.5" fill="none" stroke="#3d5c85" aria-hidden="true">
        <path d="M1 2q0 7 8 7l-2-4z" fill="#b9cde5" />
        <path d="M6 5l4-3M6 9l-2 4h7l-3-4" fill="#7895ba" />
        <circle cx="10.500" cy="3" r="2.500" fill="#8fb0d6" />
      </svg>
    </div>
    <button aria-label="Status bar menu" className="ml-0.5 pt-1.5">
      <span className="block border-x-4 border-t-4 border-x-transparent border-t-black" />
    </button>
  </footer>
);

export default function App() {
  return (
    <div className="flex h-screen min-h-[560px] flex-col overflow-hidden rounded-t-md bg-[#0b3ed2] font-['Liberation_Sans',sans-serif] text-black select-none">
      <TitleBar />
      <div className="mx-1 mb-1 flex min-h-0 flex-1 flex-col bg-[#ece9d8] shadow-[-2px_0_0_#1a66ee,1px_0_0_#2a6ff0]">
        <MenuBar />
        <Toolbars />
        <Workspace />
        <div className="my-px h-[3px] shrink-0 bg-white" />
        <CommandLine />
        <StatusBar />
      </div>
    </div>
  );
}
